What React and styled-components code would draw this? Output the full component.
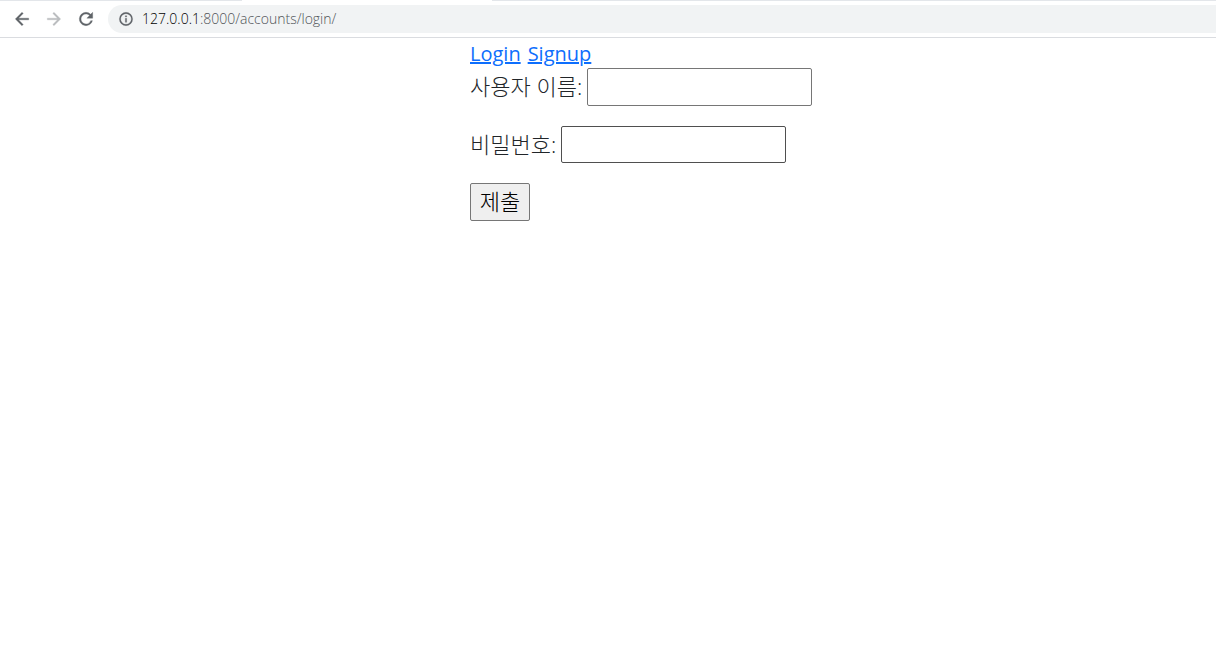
import React from "react";
import styled, { createGlobalStyle } from "styled-components";

const GlobalStyle = createGlobalStyle`
  *, *::before, *::after { box-sizing: border-box; }
  body {
    margin: 0;
    background: #fff;
    color: #212529;
    font-family: "Open Sans", "Noto Sans CJK KR", sans-serif;
    font-size: 20px;
    line-height: 30px;
  }
`;

const TabEdge = styled.div`
  display: grid;
  grid-template-columns: 242px 250px 1fr;
  height: 1px;
`;

const EdgeLine = styled.span`
  background: ${(p) => (p.$active ? "#fff" : "#e3e6ea")};
`;

const Toolbar = styled.header`
  display: flex;
  align-items: center;
  height: 37px;
  padding-left: 12px;
  border-bottom: 1px solid #dadce0;
`;

const ToolButton = styled.button`
  display: flex;
  width: 20px;
  height: 20px;
  margin-right: 12px;
  padding: 0;
  border: 0;
  background: none;
  color: ${(p) => (p.disabled ? "#babcbe" : "#5f6368")};
`;

const AddressBar = styled.div`
  display: flex;
  flex: 1;
  align-items: center;
  gap: 8px;
  height: 28px;
  padding-left: 10px;
  border-radius: 14px 0 0 14px;
  background: #f1f3f4;
  color: #5f6368;
`;

const Address = styled.span`
  color: #505458;
  font-size: 14px;
  font-weight: 300;
  line-height: 20px;
`;

const Host = styled.span`
  color: #000;
`;

const Page = styled.main`
  margin-left: calc(50% - 138px);
  padding-top: 1px;
`;

const Links = styled.nav`
  display: flex;
  gap: 7px;
  height: 29px;
`;

const PageLink = styled.a`
  color: #0d6efd;
  text-decoration: underline;
`;

const Form = styled.form`
  display: flex;
  flex-direction: column;
  align-items: flex-start;
  gap: 20px;
`;

const Field = styled.div`
  display: flex;
  align-items: center;
  gap: 5px;
`;

const Label = styled.label`
  padding-bottom: 2px;
  font-size: 22px;
  font-weight: 300;
`;

const Input = styled.input`
  width: 225px;
  height: ${(p) => (p.$dark ? 37 : 38)}px;
  padding: 1px 2px;
  border: 1px solid ${(p) => (p.$dark ? "#4f4f4f" : "#767676")};
  border-radius: 2px;
  background: #fff;
  font: inherit;
`;

const Submit = styled.button`
  width: 60px;
  height: 38px;
  padding: 0 0 2px;
  border: 1px solid #767676;
  border-radius: 2px;
  background: #efefef;
  color: #000;
  font-family: inherit;
  font-size: 22px;
  font-weight: 300;
  line-height: 30px;
`;

const Icon = ({ size = 20, path }) => (
  <svg width={size} height={size} viewBox="0 0 24 24" fill="currentColor" stroke="currentColor" strokeWidth="0.4" aria-hidden="true">
    <path d={path} />
  </svg>
);

const BACK = "M20 11H7.83l5.59-5.59L12 4l-8 8 8 8 1.41-1.41L7.83 13H20v-2z";
const FORWARD = "M12 4l-1.41 1.41L16.17 11H4v2h12.17l-5.58 5.59L12 20l8-8z";
const RELOAD =
  "M17.65 6.35A7.958 7.958 0 0 0 12 4a8 8 0 1 0 7.73 10h-2.08A5.99 5.99 0 0 1 12 18a6 6 0 1 1 0-12c1.66 0 3.14.69 4.22 1.78L13 11h7V4l-2.35 2.35z";
const INFO =
  "M11 17h2v-6h-2v6zm0-8h2V7h-2v2zm1-7a10 10 0 1 0 0 20 10 10 0 0 0 0-20zm0 18a8 8 0 1 1 0-16 8 8 0 0 1 0 16z";

export default function App() {
  return (
    <>
      <GlobalStyle />
      <TabEdge>
        <EdgeLine />
        <EdgeLine $active />
        <EdgeLine />
      </TabEdge>
      <Toolbar>
        <ToolButton type="button" aria-label="Back"><Icon path={BACK} /></ToolButton>
        <ToolButton type="button" aria-label="Forward" disabled><Icon path={FORWARD} /></ToolButton>
        <ToolButton type="button" aria-label="Reload"><Icon path={RELOAD} /></ToolButton>
        <AddressBar>
          <Icon size={16} path={INFO} />
          <Address><Host>127.0.0.1</Host>:8000/accounts/login/</Address>
        </AddressBar>
      </Toolbar>
      <Page>
        <Links>
          <PageLink href="/accounts/login/">Login</PageLink>
          <PageLink href="/accounts/signup/">Signup</PageLink>
        </Links>
        <Form>
          <Field>
            <Label htmlFor="username">사용자 이름:</Label>
            <Input id="username" name="username" type="text" />
          </Field>
          <Field>
            <Label htmlFor="password">비밀번호:</Label>
            <Input id="password" name="password" type="password" $dark />
          </Field>
          <Submit type="submit">제출</Submit>
        </Form>
      </Page>
    </>
  );
}
